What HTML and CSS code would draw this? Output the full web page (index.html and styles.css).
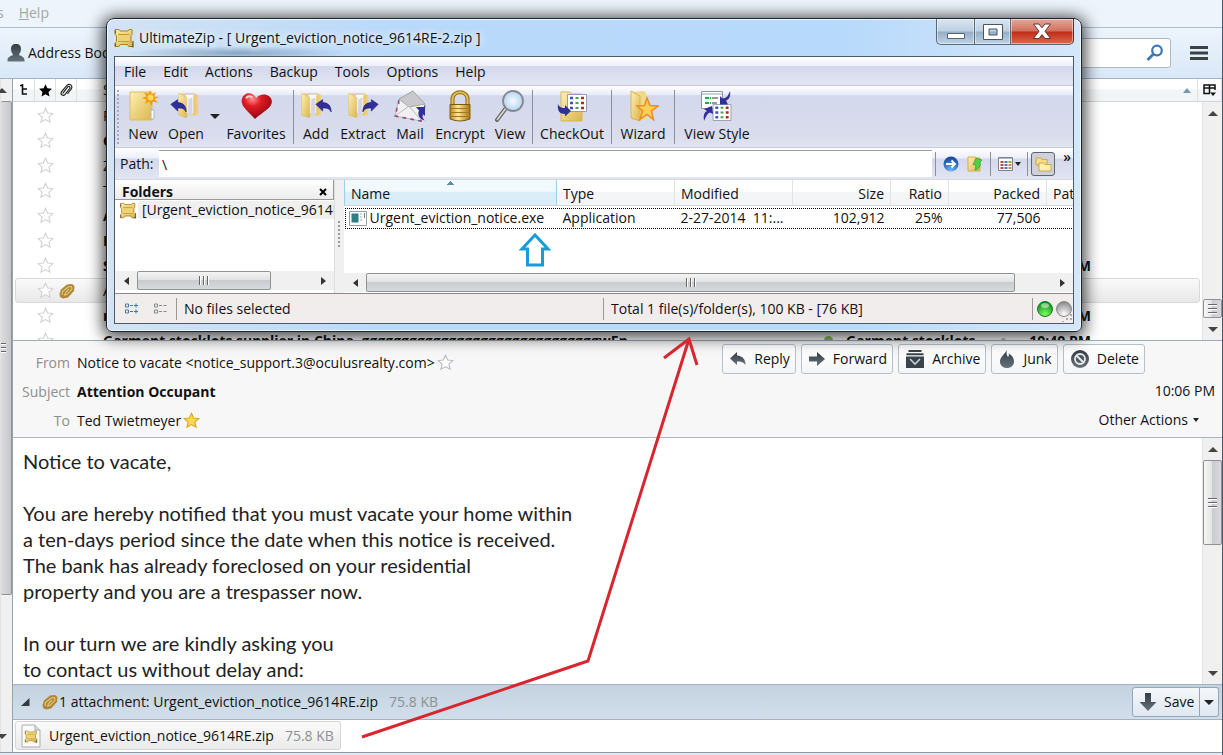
FILE: index.html
```html
<!DOCTYPE html>
<html lang="en">
<head>
<meta charset="utf-8">
<title>Mail</title>
<link rel="stylesheet" href="styles.css">
</head>
<body>
<svg class="defs" aria-hidden="true">
  <defs>
    <linearGradient id="gold" x1="0" y1="0" x2="1" y2="1"><stop offset="0" stop-color="#fdf0b4"/><stop offset="1" stop-color="#dcb54c"/></linearGradient>
    <linearGradient id="brass" x1="0" x2="1"><stop offset="0" stop-color="#b8861b"/><stop offset=".4" stop-color="#ffe79a"/><stop offset="1" stop-color="#a87413"/></linearGradient>
    <linearGradient id="slate" x1="0" y1="0" x2="0" y2="1"><stop offset="0" stop-color="#343d44"/><stop offset="1" stop-color="#66727b"/></linearGradient>
    <radialGradient id="red" cx=".35" cy=".25" r=".8"><stop offset="0" stop-color="#ff8f8f"/><stop offset=".35" stop-color="#e01c24"/><stop offset="1" stop-color="#8b0510"/></radialGradient>
    <radialGradient id="green" cx=".5" cy=".85" r=".8"><stop offset="0" stop-color="#7dff62"/><stop offset="1" stop-color="#0a8a14"/></radialGradient>
    <radialGradient id="grey" cx=".5" cy=".85" r=".8"><stop offset="0" stop-color="#fff"/><stop offset="1" stop-color="#8b8b8b"/></radialGradient>
    <radialGradient id="blue" cx=".5" cy=".9" r=".9"><stop offset="0" stop-color="#6cb8f5"/><stop offset="1" stop-color="#123f9c"/></radialGradient>
    <radialGradient id="lens"><stop offset="0" stop-color="#f4fbff"/><stop offset="1" stop-color="#b5d6f2"/></radialGradient>
    <symbol id="star" viewBox="0 0 16 16"><path d="M8 1.200l2 4.500 4.900.5-3.700 3.300 1.100 4.900L8 11.900l-4.300 2.500 1.100-4.900L1.100 6.200l4.900-.5z"/></symbol>
    <symbol id="clip" viewBox="0 0 16 16"><path d="M4.500 11.500L10 4.500c1.300-1.500 3.400.2 2.200 1.800L7 13c-2 2.400-6 .5-4.200-2.800L9 2.800c2.600-2.800 7-.3 5.200 3.700L10 12" fill="none" stroke-width="1.300" stroke-linecap="round"/></symbol>
    <symbol id="goldclip" viewBox="0 0 16 16"><path d="M.5 11L2 6.500l6-5 5-.5 2.500 2-.5 5-6 6.500-5 1-3-1.500z" fill="#ad8733"/><path d="M3 12l.5-3.500L9 4l3.500-.5.500 2.500-5 5.500-2.500.5L7 9l3-3" fill="none" stroke="#e3c983" stroke-width="1.100"/></symbol>
    <symbol id="zip" viewBox="0 0 20 20"><path d="M1 1.500h4l1 1.500h8l1-1.500h3v5l-1 1v6l1.500 1.500v3.500h-4l-1-2H6l-1 2H1V15l1.500-1.500v-6L1 6.500z" fill="url(#gold)" stroke="#a98325"/><path d="M4 5h11.500v8H4z" fill="#f0d271"/><path d="M4 6.500h11.500M4 13.500h11.500" stroke="#c79d37"/><path d="M1.500 2.500v3M1.500 15.500v3M19 13v6.500M16.500 18.500h3" stroke="#6d5a2c" stroke-width="1.200"/></symbol>
    <symbol id="folder" viewBox="0 0 32 32"><path d="M3 1h18l5 2v25H3z" fill="#edd27a"/><path d="M10 2h12v24H11z" fill="#f8f8fb" stroke="#b4b4c2" stroke-width=".7"/><path d="M14 8l5-2v21l-6 3z" fill="#d5d6e1"/><path d="M2 1l10 5v25L2 28z" fill="url(#gold)" stroke="#d9b95e" stroke-width=".6"/><path d="M20 3l3 1v23l-3 2z" fill="#ecc96a"/></symbol>
    <symbol id="swoosh" viewBox="0 0 20 16"><path d="M1 6l8-5.500v3.500c6 0 10 3.500 10 11-2-4-5-5-10-4.500V14z" fill="#302f9c" stroke="#18186c" stroke-width=".7"/></symbol>
    <symbol id="grid" viewBox="0 0 20 18"><path d="M.5.500h19v17H.500z" fill="#fff" stroke="#999eaf"/><path d="M3 4h3M3 9h3M3 14h3" stroke="#3a52b6" stroke-width="2.500"/><path d="M8.500 4h3M8.500 9h3M8.500 14h3" stroke="#4f9b55" stroke-width="2"/><path d="M14 4h3M14 9h3M14 14h3" stroke="#ae2b20" stroke-width="2.500"/></symbol>
  </defs>
</svg>

<nav class="menubar"><a href="#tools">s</a><a href="#help"><u>H</u>elp</a></nav>
<div class="mailbar">
  <button class="flat"><svg width="18" height="20" viewBox="0 0 18 20"><path d="M9 1c3.500 0 5 2 5 5S12.500 10.500 12 11.500c0 1.500 5.500 1.500 5.500 5.500v1.500H.500V17c0-4 5.500-4 5.500-5.500C5.500 10.500 4 9 4 6s1.500-5 5-5z" fill="url(#slate)"/></svg>Address Book</button>
  <span class="fill"></span>
  <label class="search"><input type="text" aria-label="Search"><svg width="18" height="18" viewBox="0 0 18 18" fill="none" stroke="#3f77b5" stroke-width="2.200"><circle cx="11" cy="6.500" r="4.800"/><path d="M7.500 10L1.500 16" stroke-width="2.800"/></svg></label>
  <button class="flat" aria-label="Menu"><svg width="18" height="14" viewBox="0 0 18 14"><path d="M0 1.500h18M0 7h18M0 12.500h18" stroke="#3a4145" stroke-width="2.800"/></svg></button>
</div>

<div class="workspace">
  <div class="vscroll side"><i class="up"></i><span class="thumb"></span><i class="down"></i></div>
  <main class="content">
    <section class="threads">
      <div class="thread-head">
        <span class="c-tree"><svg width="8" height="12" viewBox="0 0 8 12"><path d="M2.500 0v10H7M2.500 5H7M0 1.500h3" fill="none" stroke="#111" stroke-width="1.600"/></svg></span>
        <span class="c-star"><svg width="15" height="15" fill="#000"><use href="#star"/></svg></span>
        <span class="c-clip"><svg width="14" height="14" stroke="#222"><use href="#clip"/></svg></span>
        <span class="c-subject">Subject</span>
        <span class="c-sort"><svg width="8" height="5" viewBox="0 0 8 5"><path d="M4 0l4 5H0z" fill="#6d9eb0"/></svg></span>
        <span class="c-pick"><svg width="14" height="13" viewBox="0 0 14 13" fill="none" stroke="#111" stroke-width="1.500"><path d="M7 9.500H1V1h11v5M1 4h11M6.500 1v8"/><path d="M7 8.500h6L10 12z" fill="#111" stroke="none"/></svg></span>
      </div>
      <div class="thread-body">
        <ul class="rows">
          <li><svg class="st"><use href="#star"/></svg><span class="sub">P</span></li>
          <li><svg class="st"><use href="#star"/></svg><span class="sub"><b>C</b></span></li>
          <li><svg class="st"><use href="#star"/></svg><span class="sub">Z</span></li>
          <li><svg class="st"><use href="#star"/></svg><span class="sub">T</span></li>
          <li><svg class="st"><use href="#star"/></svg><span class="sub"><b>A</b></span></li>
          <li><svg class="st"><use href="#star"/></svg><span class="sub"><b>F</b></span></li>
          <li><svg class="st"><use href="#star"/></svg><span class="sub"><b>S</b></span><b class="time">PM</b></li>
          <li class="sel"><svg class="st"><use href="#star"/></svg><svg class="gc"><use href="#goldclip"/></svg><span class="sub">A</span></li>
          <li><svg class="st"><use href="#star"/></svg><span class="sub"><b>r</b></span><b class="time">PM</b></li>
          <li><svg class="st"><use href="#star"/></svg><span class="sub"><b>Garment stocklots supplier in China, ggggggggggggggggggggggggggggggwEn</b></span><i class="dot"></i><b class="who">Garment stocklots</b><i class="dot off"></i><b class="time">10:40 PM</b></li>
        </ul>
        <div class="vscroll"><i class="up"></i><span class="track"></span><span class="thumb small"></span><i class="down"></i></div>
      </div>
    </section>

    <header class="msg-head">
      <dl class="fields">
        <dt>From</dt><dd>Notice to vacate &lt;notice_support.3@oculusrealty.com&gt;<svg class="big-star"><use href="#star"/></svg></dd>
        <dt>Subject</dt><dd><b>Attention Occupant</b></dd>
        <dt>To</dt><dd>Ted Twietmeyer<svg class="big-star on"><use href="#star"/></svg></dd>
      </dl>
      <div class="msg-side">
        <div class="actions">
          <button class="btn"><svg width="18" height="16" viewBox="0 0 18 16"><path d="M1 7.500L8 1v3.500c6 .5 8.500 4 8.500 9.500-2-3-4.500-3.500-8.500-3.500V14z" fill="url(#slate)"/></svg>Reply</button>
          <button class="btn"><svg width="18" height="16" viewBox="0 0 18 16"><path d="M1 5.500h8V1l8 7-8 7v-4.500H1z" fill="url(#slate)"/></svg>Forward</button>
          <button class="btn"><svg width="20" height="20" viewBox="0 0 20 20"><path d="M3.500 1h13v2h-13zM1.500 4.200h17v2h-17zM1 7.500h18V19H1z" fill="#39434a"/><path d="M5 10l5 5 5-5" fill="none" stroke="#c9d0d6" stroke-width="1.600"/></svg>Archive</button>
          <button class="btn"><svg width="18" height="20" viewBox="0 0 18 20"><path d="M9 1c-1 4 0 5 1 7 1-1 1-2 .7-3.500C14 6 16 9 16 12.500 16 16.500 13 19 9 19s-7-2.500-7-6.500C2 8 6 6 9 1z" fill="url(#slate)"/></svg>Junk</button>
          <button class="btn"><svg width="20" height="20" viewBox="0 0 20 20"><circle cx="10" cy="10" r="9" fill="url(#slate)"/><circle cx="10" cy="10" r="5" fill="none" stroke="#e8ebee" stroke-width="1.800"/><path d="M6.500 6.500l7 7" stroke="#e8ebee" stroke-width="2"/></svg>Delete</button>
        </div>
        <span class="when">10:06 PM</span>
        <button class="flat other">Other Actions<i class="caret"></i></button>
      </div>
    </header>

    <section class="message">
      <article class="mail-text">
        <p>Notice to vacate,</p>
        <p>You are hereby notified that you must vacate your home within<br>a ten-days period since the date when this notice is received.<br>The bank has already foreclosed on your residential<br>property and you are a trespasser now.</p>
        <p>In our turn we are kindly asking you<br>to contact us without delay and:</p>
      </article>
      <div class="vscroll"><i class="up"></i><span class="thumb mid"></span><span class="track"></span><i class="down"></i></div>
    </section>

    <div class="attach-bar">
      <svg width="9" height="9" viewBox="0 0 9 9"><path d="M8.500 0v8H0z" fill="#333b42"/></svg>
      <svg class="gc"><use href="#goldclip"/></svg><span>1 attachment: Urgent_eviction_notice_9614RE.zip</span><span class="dim">75.8 KB</span>
      <div class="split"><button class="btn"><svg width="18" height="20" viewBox="0 0 18 20"><path d="M6 1h6v9h5.500L9 19 .5 10H6z" fill="url(#slate)"/></svg>Save</button><button class="btn" aria-label="Save options"><i class="caret big"></i></button></div>
    </div>
    <div class="attach-list">
      <button class="file"><svg width="20" height="24" viewBox="0 0 20 24"><path d="M1 1h13l5 5v17H1z" fill="#fafafa" stroke="#a9adb2"/><path d="M14 1v5h5" fill="#ddd" stroke="#a9adb2"/><svg x="3" y="6" width="14" height="13" viewBox="0 0 20 20"><use href="#zip" width="20" height="20"/></svg></svg>Urgent_eviction_notice_9614RE.zip<span class="dim">75.8 KB</span></button>
    </div>
  </main>
</div>
<footer class="foot"></footer>

<section class="window">
  <header class="title">
    <svg width="20" height="20"><use href="#zip"/></svg><h1>UltimateZip - [ Urgent_eviction_notice_9614RE-2.zip ]</h1>
    <div class="winbtns">
      <button aria-label="Minimize"><svg width="20" height="16" viewBox="0 0 20 16"><path d="M1.500 9.500h17v5h-17z" fill="#fff" stroke="#5a6470"/></svg></button>
      <button aria-label="Maximize"><svg width="20" height="16" viewBox="0 0 20 16"><path d="M.5.500h19v15H.500zM6 5v6h8V5z" fill="#fff" fill-rule="evenodd" stroke="#4a5562"/></svg></button>
      <button class="close" aria-label="Close"><svg width="20" height="17" viewBox="0 0 20 17"><path d="M1.500 1H7l3 3.800L13 1h5.500l-5.500 7.200 5.500 7.300H13l-3-3.900-3 3.900H1.500L7 8.200z" fill="#fff" stroke="#5b3a3a"/></svg></button>
    </div>
  </header>
  <div class="client">
    <nav class="menu"><a href="#file">File</a><a href="#edit">Edit</a><a href="#actions">Actions</a><a href="#backup">Backup</a><a href="#wtools">Tools</a><a href="#options">Options</a><a href="#whelp">Help</a></nav>
    <div class="tools">
      <i class="grip"></i>
      <button class="w44"><svg width="32" height="32" viewBox="0 0 32 32"><path d="M3 2h22v28H3z" fill="url(#gold)" stroke="#dfbd60"/><path d="M24 20h3v9h-3z" fill="#fff" stroke="#a8b7c8"/><path d="M23 0l1.500 4.500L29 2l-2 4.500 5 .5-4.500 2 3.500 4-5-1.500L24 16l-1.500-4.500L18 14l1.500-4.500L15 8l4.500-1.500L17 2l4.500 2z" fill="#f59a0c"/><circle cx="23.500" cy="7.500" r="3" fill="#ffd95a"/></svg>New</button>
      <button class="w42"><svg width="32" height="32" viewBox="0 0 32 32"><use href="#folder" x="7" width="26" height="31"/><use href="#swoosh" y="9" width="17" height="14"/></svg>Open</button>
      <button class="w16" aria-label="Open recent"><i class="caret big"></i></button>
      <button class="w66"><svg width="32" height="32" viewBox="0 0 32 32"><g transform="rotate(9 16 16)"><path d="M17 29C8 22 0 18 1 11 2 4 10 2 15 8c3-6 14-7 16 1 1 7-8 12-14 20z" fill="url(#red)"/><path d="M5 10c1-3 4-3 6-2" fill="none" stroke="#ffd0d0" stroke-width="2"/></g></svg>Favorites</button>
      <i class="sep"></i>
      <button class="w44"><svg width="32" height="32" viewBox="0 0 32 32"><use href="#folder" width="26" height="31"/><use href="#swoosh" x="15" y="9" width="17" height="14"/></svg>Add</button>
      <button class="w50"><svg width="32" height="32" viewBox="0 0 32 32"><use href="#folder" width="26" height="31"/><g transform="translate(32 9) scale(-1 1)"><use href="#swoosh" width="17" height="14"/></g></svg>Extract</button>
      <button class="w44"><svg width="32" height="32" viewBox="0 0 32 32"><path d="M5 9L19 1l12 13-4 17L1 26z" fill="#f0f0f2" stroke="#bbb"/><path d="M5 9L19 1l12 13-16 3z" fill="#c9c9cd" stroke="#aaa"/><path d="M1 26l14-10 12 14" fill="none" stroke="#bbb"/><path d="M5 10L1 26l26 5 4-16" fill="none" stroke="#3f68c8" stroke-width="1.500" stroke-dasharray="3 5"/><path d="M5 12L1 26l26 5 4-14" fill="none" stroke="#d33" stroke-width="1.500" stroke-dasharray="2 6"/><path d="M22 17h9v9l-2.500-2.500c-1 2 0 4 2 7-6-2-7-6-5.500-10z" fill="#302f9c"/></svg>Mail</button>
      <button class="w56"><svg width="32" height="32" viewBox="0 0 32 32"><path d="M8.500 16V9c0-9 15-9 15 0v7" fill="none" stroke="#8c6512" stroke-width="4"/><path d="M8.500 16V9c0-9 15-9 15 0v7" fill="none" stroke="#e6c050" stroke-width="2"/><path d="M6 14.500h20V29q-10 4-20 0z" fill="url(#brass)" stroke="#7e5a10"/><path d="M6 18.500h20M6 22.500h20M6 26.500h20" stroke="#a37818"/></svg>Encrypt</button>
      <button class="w44"><svg width="32" height="32" viewBox="0 0 32 32"><path d="M12 18L3 30" stroke="#666" stroke-width="4" stroke-linecap="round"/><path d="M12 18L3 30" stroke="#ddd" stroke-width="1.500"/><circle cx="19" cy="11" r="10" fill="url(#lens)" stroke="#85898f" stroke-width="1.800"/></svg>View</button>
      <i class="sep"></i>
      <button class="w78"><svg width="32" height="32" viewBox="0 0 32 32"><path d="M5 2h9l2 2h10v27H5z" fill="url(#gold)" stroke="#d5b75c"/><use href="#grid" x="11" y="4" width="20" height="18"/><path d="M2 14c1 3 4 4.500 7 4V15l6 6-6 5.500V24C4 24 1 21 2 14z" fill="#302f9c"/></svg>CheckOut</button>
      <i class="sep"></i>
      <button class="w60"><svg width="32" height="32" viewBox="0 0 32 32"><path d="M5 2l12-1 2 2v26L5 30z" fill="#f0d98a"/><path d="M4 1l9 5v25l-9-3z" fill="url(#gold)" stroke="#d6b65a"/><path d="M20 8l3 7.500 8 .5-6.500 5 2 8.500-6.500-5-7 5 2.500-8.500L10 16l7.500-.5z" fill="#ffcf5a" stroke="#ee8d18" stroke-width="1.500"/></svg>Wizard</button>
      <i class="sep"></i>
      <button class="w84"><svg width="32" height="32" viewBox="0 0 32 32"><path d="M.5 1.500h21v17H.500z" fill="#fff" stroke="#8c93a2"/><path d="M1 4h20" stroke="#9aa2b5"/><path d="M4 8h6M4 13h6" stroke="#2fa43a" stroke-width="2" stroke-dasharray="4 1"/><path d="M11 8h6M11 13h5" stroke="#333"/><use href="#grid" x="11" y="14" width="20" height="17"/><path d="M29 1c1 7-2 9-4 9.500l2 4h-8V6l2.500 2.500c4 0 6-3 7.500-7.500z" fill="#302f9c"/><path d="M3 31c-1-7 1-9 3-10l-3-2 8-3 1 8-3-1.500c-3 1-4 4-6 8.500z" fill="#302f9c"/></svg>View Style</button>
    </div>
    <div class="path">
      <label for="path">Path:</label><input id="path" type="text" value="\">
      <i class="sep"></i>
      <button aria-label="Go"><svg width="16" height="16" viewBox="0 0 16 16"><circle cx="8" cy="8" r="7.500" fill="url(#blue)"/><path d="M3 8h9M8.500 4.500L12 8l-3.500 3.500" fill="none" stroke="#fff" stroke-width="1.800"/></svg></button>
      <button aria-label="Up"><svg width="16" height="16" viewBox="0 0 16 16"><path d="M1 1h7l1 1h4v13H1z" fill="url(#gold)" stroke="#d3ad48"/><path d="M8 14c1-2 1-4 0-6l-2 1 3-7 6 2-2 2c1 4-1 7-5 8z" fill="#52cf48" stroke="#219420" stroke-width=".6"/></svg></button>
      <i class="sep"></i>
      <button aria-label="Layout" class="wide"><svg width="15" height="14" viewBox="0 0 15 14"><path d="M.5.500h14v13H.500z" fill="#fff" stroke="#7b8291"/><path d="M1 1.500h13" stroke="#aeb6c4"/><path d="M2.500 5h3M2.500 8h3M2.500 11h3" stroke="#c4453a" stroke-width="2"/><path d="M6.500 5h3M6.500 8h3M6.500 11h3" stroke="#4b78d0" stroke-width="2"/><path d="M10.500 5h3M10.500 8h3M10.500 11h3" stroke="#ca9133" stroke-width="2"/></svg><i class="caret"></i></button>
      <i class="sep"></i>
      <button class="pressed" aria-label="Folders"><svg width="17" height="16" viewBox="0 0 17 16"><path d="M1 2h5l1 1.500h5V9H1z" fill="#f7dd85" stroke="#c39a35" stroke-width=".8"/><path d="M4 7h5l1 1.500h6V15H4z" fill="#fff0a8" stroke="#c39a35" stroke-width=".8"/></svg></button>
      <span class="more">»</span>
    </div>
    <div class="panes">
      <aside class="tree">
        <h2>Folders<button aria-label="Close folders"><svg width="8" height="8" viewBox="0 0 8 8"><path d="M1 1l6 6M7 1L1 7" stroke="#000" stroke-width="2"/></svg></button></h2>
        <div class="node"><svg width="18" height="17" viewBox="0 0 20 20"><use href="#zip" width="20" height="20"/></svg><span>[Urgent_eviction_notice_9614RE-2.zip]</span></div>
        <div class="hscroll"><i class="left"></i><span class="thumb t-left"></span><span class="track"></span><i class="right"></i></div>
      </aside>
      <div class="splitter"></div>
      <div class="files">
        <table>
          <colgroup><col class="k-name"><col class="k-type"><col class="k-mod"><col class="k-size"><col class="k-ratio"><col class="k-pack"><col></colgroup>
          <thead><tr><th class="sorted">Name</th><th>Type</th><th>Modified</th><th class="r">Size</th><th class="r">Ratio</th><th class="r">Packed</th><th>Path</th></tr></thead>
          <tbody><tr><td class="nm"><svg width="18" height="15" viewBox="0 0 18 15"><path d="M.5.500h17v14H.500z" fill="#fff" stroke="#999ea6"/><path d="M2.500 2.500h7v9h-7z" fill="#2f7f83"/><path d="M11 3h2M11 6h2M11 9h2M15 3h1" stroke="#9aa" /><path d="M15.500 2v5" stroke="#4a9b6b"/></svg>Urgent_eviction_notice.exe</td><td>Application</td><td>2-27-2014&nbsp; 11:...</td><td class="r">102,912</td><td class="r">25%</td><td class="r">77,506</td><td></td></tr></tbody>
        </table>
        <svg class="pointer" width="32" height="34" viewBox="0 0 32 34"><path d="M16 2L3 16h5.500v16h15V16H29z" fill="#fff" stroke="#169cd8" stroke-width="3"/></svg>
        <div class="hscroll"><i class="left"></i><span class="thumb"></span><i class="right"></i></div>
      </div>
    </div>
    <footer class="status">
      <svg width="13" height="11" viewBox="0 0 13 11" fill="none" stroke="#2e7fb5"><path d="M.5 1h3v3h-3zM.5 7h3v3h-3z"/><path d="M5 2.500h3M5 8.500h3M9 2.500h4M11 .5v4M9 8.500h4M11 6.500v4"/></svg>
      <svg width="13" height="11" viewBox="0 0 13 11" fill="none" stroke="#888"><path d="M.5 1h3v3h-3zM.5 7h3v3h-3z"/><path d="M5 2.500h3M5 8.500h3M9.500 2.500h3M9.500 8.500h3"/></svg>
      <span class="s1">No files selected</span><span class="s2">Total 1 file(s)/folder(s), 100 KB - [76 KB]</span>
      <span class="lights"><svg width="36" height="24" viewBox="0 0 36 24"><circle cx="8" cy="11" r="7.500" fill="url(#green)" stroke="#1d7f24"/><ellipse cx="8" cy="7.500" rx="4" ry="2.500" fill="#fff" opacity=".5"/><circle cx="27" cy="11" r="7.500" fill="url(#grey)" stroke="#8a8a8a"/><path d="M34 16v8M30 20v4M26 23v1" stroke="#aaa" stroke-width="2" stroke-dasharray="2 2"/></svg></span>
    </footer>
  </div>
</section>

<svg class="callout" width="360" height="420" viewBox="0 0 360 420" fill="none" stroke="#d8262f"><path d="M2 407l226-76L329 9" stroke-width="3"/><path d="M304 28l25-19 8 26" stroke-width="3"/></svg>
</body>
</html>
```
FILE: styles.css
```css
* { box-sizing: border-box; }
body {
  margin: 0;
  min-height: 100vh;
  display: flex;
  flex-direction: column;
  position: relative;
  overflow: hidden;
  background: #fff;
  border-right: 1px solid #4c566c;
  font: 14px/20px "Open Sans", "Noto Sans", sans-serif;
  color: #111;
}
button, input { font: inherit; color: inherit; }
button { border: 0; background: none; padding: 0; margin: 0; }
a { color: inherit; text-decoration: none; }
svg { flex: none; display: block; }
.defs { position: absolute; width: 0; height: 0; }
.fill { flex: 1; }
.flat { display: flex; align-items: center; gap: 3px; white-space: nowrap; }

/* mail client chrome */
.menubar { display: flex; gap: 15px; height: 28px; padding-top: 3px; background: #edf4fc; border-bottom: 1px solid #a9bdd3; color: #a3a6aa; }
.menubar a:first-child { margin-left: -3px; }
.mailbar { display: flex; align-items: center; height: 51px; padding: 0 14px 0 7px; background: linear-gradient(#edf4fc, #dae8f7); border-bottom: 1px solid #9fb4cb; }
.search { display: flex; align-items: center; width: 320px; height: 30px; margin-right: 19px; padding-right: 6px; background: #fff; border: 1px solid #a8b9cc; border-radius: 3px; }
.search input { flex: 1; min-width: 0; border: 0; background: none; outline: 0; }
.workspace { flex: 1; display: flex; min-height: 0; }
.content { flex: 1; min-width: 0; display: flex; flex-direction: column; border-left: 1px solid #9aa1ab; }

/* scroll bars */
.vscroll { width: 20px; flex: none; display: flex; flex-direction: column; align-items: center; background: #f0f0f0; border-left: 1px solid #e2e2e2; }
.vscroll .thumb { width: 100%; border: 1px solid #929292; border-radius: 2px; background: linear-gradient(90deg, #f6f6f6, #e4e4e6 45%, #cbccd0 50%, #d8d9dc); display: flex; align-items: center; justify-content: center; }
.vscroll .thumb.small { height: 19px; }
.vscroll .thumb.mid { height: 85px; }
.vscroll .thumb::before { content: ""; width: 9px; height: 10px; background: repeating-linear-gradient(#666 0 1px, #fff 1px 2px, transparent 2px 4px); }
.track { flex: 1; }
.up, .down, .left, .right { flex: none; width: 20px; height: 22px; display: flex; align-items: center; justify-content: center; }
.up::before, .down::before, .left::before, .right::before { content: ""; border: 5px solid transparent; }
.up::before { border-width: 0 5px 5px; border-bottom-color: #444; }
.down::before { border-width: 5px 5px 0; border-top-color: #444; }
.left::before { border-width: 4px 5px 4px 0; border-right-color: #333; }
.right::before { border-width: 4px 0 4px 5px; border-left-color: #333; }
.side { width: 12px; padding-bottom: 5px; align-items: flex-end; }
.side .thumb { flex: 1; margin-bottom: 130px; border-left: 0; background: linear-gradient(90deg, #dcdcde, #c6c7cb); justify-content: flex-start; }
.side .thumb::before { width: 5px; }
.hscroll { display: flex; height: 19px; background: #f0f0f0; }
.hscroll .left, .hscroll .right { height: 19px; width: 22px; }
.hscroll .thumb { flex: 1; border: 1px solid #929292; border-radius: 2px; background: linear-gradient(#f4f4f4, #e3e3e5 45%, #cbccd0 50%, #d8d9dc); display: flex; align-items: center; justify-content: center; }
.hscroll .thumb::before { content: ""; width: 10px; height: 9px; background: repeating-linear-gradient(90deg, #666 0 1px, #fff 1px 2px, transparent 2px 4px); }
.hscroll .t-left { flex: none; width: 134px; }

/* thread list */
.threads { height: 262px; flex: none; display: flex; flex-direction: column; border-bottom: 1px solid #9fabb9; }
.thread-head { display: flex; height: 23px; flex: none; background: linear-gradient(#fff 45%, #f3f4f5 50%); border-bottom: 1px solid #d5d5d5; }
.thread-head > span { display: flex; align-items: center; justify-content: center; border-right: 1px solid #dfdfdf; }
.c-tree { width: 22px; }
.c-star { width: 21px; }
.c-clip { width: 21px; }
.thread-head .c-subject { flex: 1; justify-content: flex-start; padding-left: 26px; border: 0; }
.thread-head .c-sort { width: 22px; }
.c-pick { width: 24px; }
.thread-body { flex: 1; min-height: 0; display: flex; }
.rows { flex: 1; min-width: 0; margin: 0; padding: 1px 2px 0 2px; list-style: none; overflow: hidden; }
.rows li { height: 25px; display: flex; align-items: center; position: relative; border: 1px solid transparent; border-radius: 3px; padding-left: 21px; white-space: nowrap; }
.rows .sel { border-color: #d9d9d9; background: linear-gradient(#fafafa, #e8e8e8); }
.st { width: 17px; height: 17px; fill: #fff; stroke: #cfd0d2; }
.rows .sub { position: absolute; left: 87px; }
.gc { width: 16px; height: 16px; }
.rows .gc { margin-left: 5px; }
.rows .time { margin-left: auto; margin-right: 108px; }
.rows .dot { width: 9px; height: 9px; margin-left: 770px; border-radius: 50%; background: #8cc04b; }
.rows .dot.off { width: 5px; height: 5px; margin-left: 26px; background: #bbb; }
.who { margin-left: 13px; }

/* message header */
.msg-head { display: flex; justify-content: space-between; background: #f7f7f7; border-bottom: 1px solid #a9b5c4; flex: none; height: 97px; }
.fields { display: grid; grid-template-columns: 57px auto; grid-auto-rows: 29px; column-gap: 7px; align-items: center; margin: 0; padding-top: 7px; white-space: nowrap; }
.fields dt { text-align: right; color: #8e8e8e; }
.fields dd { margin: 0; display: flex; align-items: center; gap: 2px; }
.big-star { width: 17px; height: 17px; fill: #fff; stroke: #b5b8bc; }
.big-star.on { fill: #ffd84d; stroke: #d9a520; }
.msg-side { display: flex; flex-direction: column; align-items: flex-end; padding: 3px 7px 0 0; }
.actions { display: flex; gap: 5px; margin-right: 70px; }
.btn { display: flex; align-items: center; justify-content: space-between; gap: 7px; height: 30px; padding: 0 5px 0 6px; background: linear-gradient(#fff, #f4f5f7); border: 1px solid #b7bfca; border-radius: 3px; white-space: nowrap; }
.when { margin-top: 7px; }
.other { margin-top: 9px; padding-right: 16px; }
.caret { display: inline-block; border: 3px solid transparent; border-top: 4px solid #222; border-bottom: 0; }
.caret.big { border-width: 5px 5px 0; }
.other .caret { margin-left: 2px; }

/* message */
.message { flex: 1; display: flex; min-height: 0; }
.mail-text { flex: 1; padding: 10px 10px 0; font: 20px/26px Lato, "Open Sans", sans-serif; color: #222; }
.mail-text p { margin: 0 0 26px; }
.mail-text p:last-child { margin: 0; }
.attach-bar { display: flex; align-items: center; height: 36px; flex: none; padding: 0 3px 0 8px; background: linear-gradient(#c4d2e0, #d2dfeb); border: solid #a3b3c4; border-width: 1px 0; white-space: nowrap; }
.attach-bar .gc { margin-left: 12px; margin-right: 1px; }
.dim { color: #8b9096; margin-left: 11px; }
.split { display: flex; margin-left: auto; }
.split .btn { background: linear-gradient(#f4f7fb, #dfe7f0); border-color: #93a5b9; }
.split .btn:first-child { width: 68px; border-radius: 3px 0 0 3px; }
.split .btn:last-child { width: 19px; border-left: 0; padding: 0; justify-content: center; border-radius: 0 3px 3px 0; }
.attach-list { flex: none; height: 32px; padding: 1px 2px; }
.file { display: flex; align-items: center; height: 29px; padding: 0 6px 0 5px; background: linear-gradient(#fbfbfb, #eaeaea); border: 1px solid #d5d5d5; border-radius: 3px; white-space: nowrap; }
.file > svg { margin-right: 8px; }
.foot { height: 3px; flex: none; background: #e2ebf5; border-top: 1px solid #8d99a8; }

/* floating archive window */
.window { position: absolute; left: 106px; right: 140px; top: 18px; padding: 0 7px 7px; border: 1px solid #1b2633; border-radius: 8px 8px 6px 6px; background: radial-gradient(ellipse 110px 7px at 130px 34px, rgba(95, 130, 165, .6), transparent), linear-gradient(90deg, #d3e3f3, #b9d9fa 30%, #b7d9fb 75%, #d5e7fa); box-shadow: 0 2px 16px 3px rgba(0, 0, 0, .75), inset 0 0 0 1px #eef7ff; }
.title { display: flex; align-items: center; height: 37px; }
.title h1 { font: inherit; margin: 0 0 0 5px; text-shadow: 0 0 6px #fff, 0 0 8px #fff; white-space: nowrap; }
.winbtns { display: flex; align-self: flex-start; margin-left: auto; }
.winbtns button { width: 36px; height: 26px; display: flex; align-items: center; justify-content: center; border: 1px solid #5b6a7b; border-top: 0; border-right: 0; background: linear-gradient(#d9e6f1, #bdd0e2 48%, #96afc6 52%, #bdd3e6); box-shadow: inset 0 0 0 1px rgba(255, 255, 255, .45); }
.winbtns button:first-child { width: 38px; border-bottom-left-radius: 5px; }
.winbtns .close { width: 64px; border-right: 1px solid #5b2a2a; border-bottom-right-radius: 5px; background: linear-gradient(#e4a79b, #d2705e 48%, #bf2d17 52%, #dc6a4e); }
.client { border: 1px solid #4c5b6b; background: #f0f0f0; white-space: nowrap; }
.menu { display: flex; gap: 17px; height: 29px; padding: 5px 9px; background: linear-gradient(#fff, #eceffa 32%, #d4d8ec 34%, #e2e5f2); border-bottom: 1px solid #c4c7cf; }
.tools { display: flex; align-items: center; height: 62px; padding-left: 2px; background: linear-gradient(#fff, #e9ecf7 14%, #d4d8ec 16%, #d9dded 85%, #e2e5f2); border-bottom: 1px solid #c9ccd6; }
.tools button { flex: none; display: flex; flex-direction: column; align-items: center; height: 54px; justify-content: space-between; line-height: 20px; }
.grip { width: 2px; height: 54px; margin-right: 2px; background: repeating-linear-gradient(#a5abc0 0 2px, transparent 2px 4px); }
.sep { flex: none; width: 1px; height: 54px; background: #8b8f9c; }
.tools .w16 { width: 16px; justify-content: center; }
.w42 { width: 42px; }
.w44 { width: 44px; }
.w50 { width: 50px; }
.w56 { width: 56px; }
.w60 { width: 62px; }
.w66 { width: 66px; margin-right: 4px; }
.tools .w66 { margin-right: 4px; }
.w78 { width: 78px; }
.w84 { width: 84px; }
.path { display: flex; align-items: center; height: 32px; background: linear-gradient(#fff, #eceffa 32%, #d4d8ec 36%, #e2e5f2); border-bottom: 1px solid #d4d7de; }
.path label { width: 44px; padding-left: 5px; }
.path input { flex: 1; min-width: 0; height: 27px; padding: 0 3px; border: 0; border-top: 1px solid #a0a0a0; background: #fff; outline: 0; }
.path .sep { height: 24px; margin: 0 3px; }
.path button { width: 24px; height: 24px; display: flex; align-items: center; justify-content: center; gap: 2px; }
.path .wide { width: 30px; }
.path .pressed { border: 1px solid #5e6470; border-radius: 3px; background: #cfd1da; }
.path .more { align-self: flex-start; padding: 0 2px 0 8px; font-weight: 600; line-height: 18px; }
.panes { display: flex; height: 113px; }
.tree { width: 220px; flex: none; display: flex; flex-direction: column; background: #fff; border-right: 1px solid #ddd; }
.tree h2 { display: flex; align-items: center; justify-content: space-between; height: 20px; margin: 0; padding: 5px 6px 0 7px; font-size: 14px; line-height: 16px; background: linear-gradient(#fff, #ececec); border: solid #999; border-width: 0 1px 1px 0; }
.node { display: flex; align-items: center; height: 20px; padding-left: 4px; overflow: hidden; }
.node span { margin-left: 1px; padding-left: 4px; background: #efefef; border-radius: 3px; line-height: 18px; }
.tree .hscroll { margin: auto 0 3px; }
.splitter { width: 9px; flex: none; background: repeating-linear-gradient(#9a9a9a 0 2px, #f0f0f0 2px 4px) no-repeat 3px 41px / 2px 26px #f0f0f0; }
.files { flex: 1; min-width: 0; display: flex; flex-direction: column; overflow: hidden; background: #fff; position: relative; }
.files table { width: 800px; table-layout: fixed; border-collapse: collapse; }
.k-name { width: 212px; }
.k-type { width: 118px; }
.k-mod { width: 118px; }
.k-size { width: 98px; }
.k-ratio { width: 58px; }
.k-pack { width: 98px; }
.files th, .files td { padding: 0 6px; text-align: left; font-weight: 400; overflow: hidden; }
.files th { height: 25px; padding-top: 3px; line-height: 20px; background: linear-gradient(#fff 45%, #f4f5f7 50%); border-right: 1px solid #e0e3e8; border-bottom: 1px solid #d5d5d5; }
.files .sorted { background: conic-gradient(from 135deg at 50% 0, #5d8ea5 90deg, transparent 0) no-repeat 50% 1px / 9px 4px, linear-gradient(#f1f9fd 45%, #d9eef8 50%); border-right-color: #96d1ee; border-left: 1px solid #96d1ee; }
.files .r { text-align: right; padding-right: 6px; }
.files tbody::before { content: ""; display: block; height: 2px; }
.files td { height: 21px; line-height: 20px; }
.files tbody tr { outline: 1px dotted #000; outline-offset: -1px; }
.files .nm { display: flex; align-items: center; gap: 3px; padding: 0 0 0 4px; }
.pointer { position: absolute; left: 175px; top: 53px; }
.files .hscroll { margin: auto 0 1px; }
.files .hscroll .right { margin-left: 36px; }
.status { display: flex; align-items: center; height: 30px; padding-left: 10px; background: #f1edec; border-top: 1px solid #8a8a8a; }
.status svg + svg { margin-left: 16px; }
.s1, .s2, .lights { height: 22px; line-height: 22px; border-left: 1px solid #999; padding-left: 7px; }
.s1 { width: 427px; margin-left: 9px; }
.s2 { flex: 1; }
.lights { padding-left: 4px; }

/* drawn annotation above everything */
.callout { position: absolute; left: 360px; top: 330px; pointer-events: none; }
```
